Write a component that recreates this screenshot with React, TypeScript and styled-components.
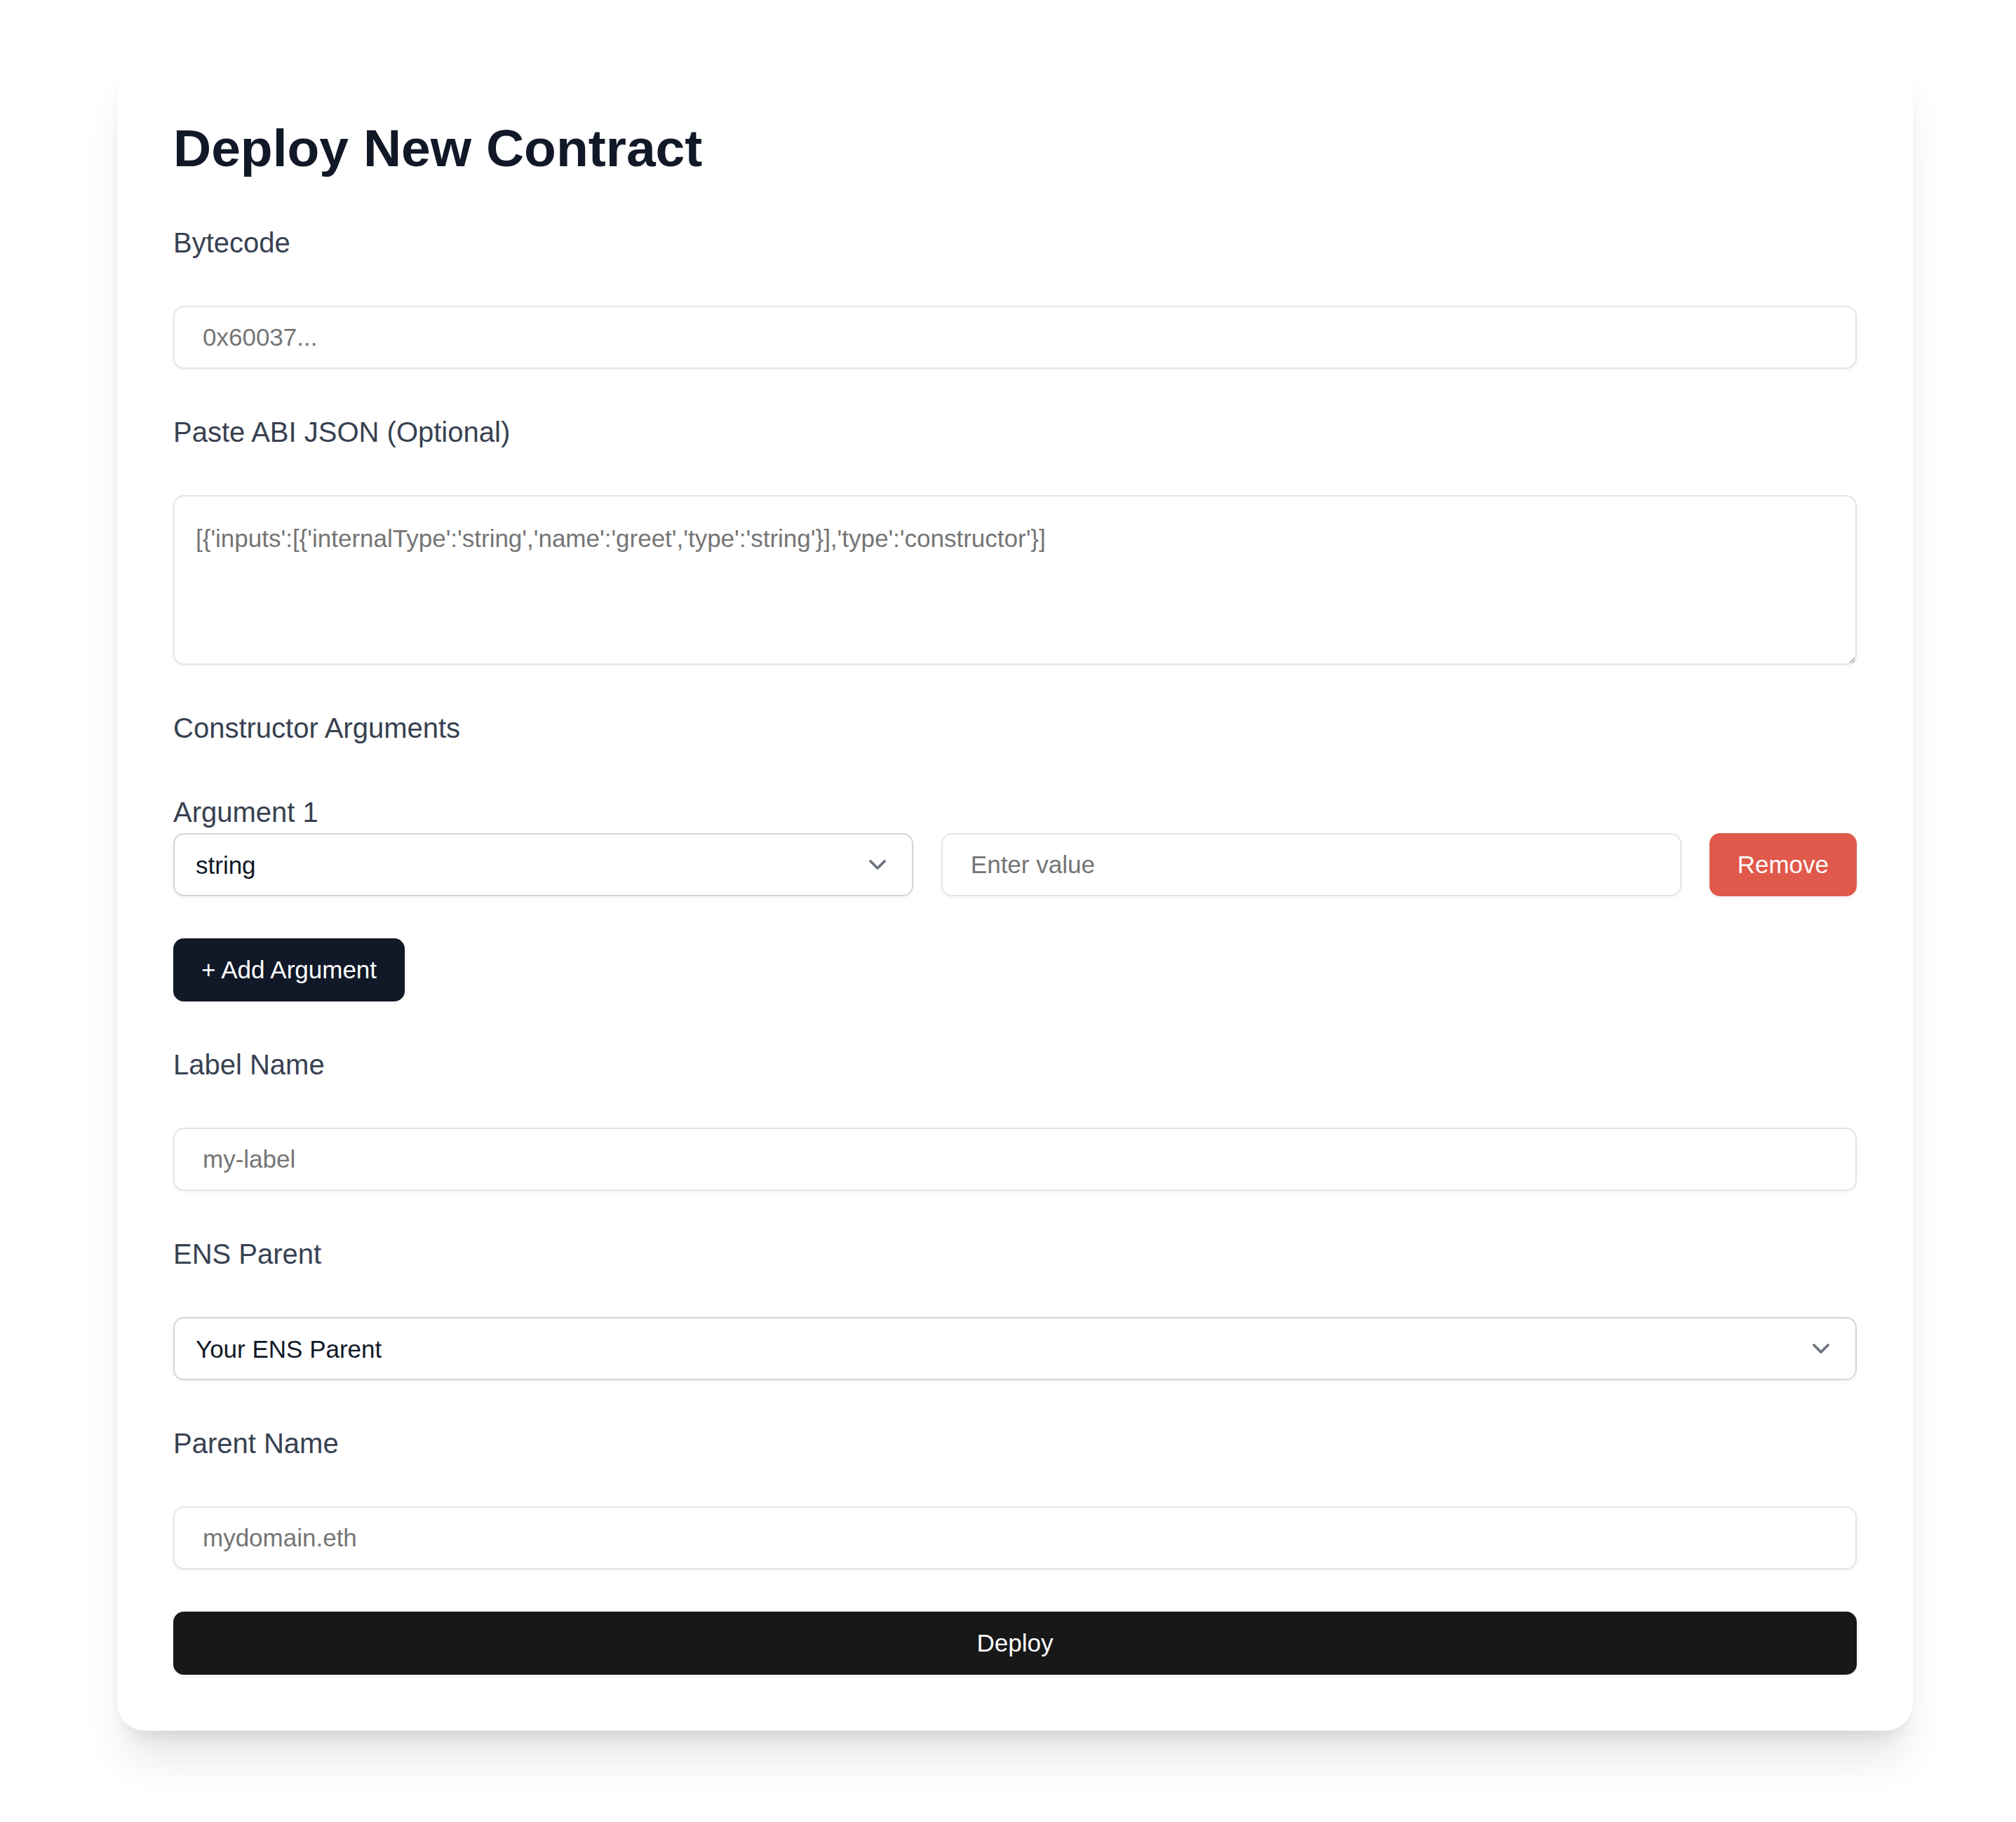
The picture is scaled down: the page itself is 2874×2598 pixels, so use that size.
import styled, { createGlobalStyle } from "styled-components";

const GlobalStyle = createGlobalStyle`
  html, body {
    margin: 0;
    padding: 0;
    background: #ffffff;
  }
  body {
    font-family: "Liberation Sans", Arial, Helvetica, sans-serif;
  }
  * {
    box-sizing: border-box;
  }
`;

const Page = styled.main`
  min-height: 2598px;
  padding: 83px 146px 120px 167px;
`;

const Card = styled.section`
  width: 2560px;
  background: #ffffff;
  border-radius: 40px;
  padding: 83px 80px 80px;
  box-shadow: 0 50px 62px -12px rgba(0, 0, 0, 0.1),
    0 20px 25px -15px rgba(0, 0, 0, 0.1), 0 0 12px rgba(0, 0, 0, 0.02);
`;

const Form = styled.form`
  display: flex;
  flex-direction: column;
  gap: 60px;
`;

const Title = styled.h1`
  margin: 0;
  font-size: 75px;
  line-height: 90px;
  font-weight: 700;
  color: #111827;
`;

const Label = styled.label`
  display: block;
  font-size: 40px;
  line-height: 60px;
  color: #374151;
`;

const TextInput = styled.input`
  display: block;
  width: 100%;
  min-width: 0;
  height: 90px;
  padding: 0 40px;
  border: 2px solid #e5e5e5;
  border-radius: 15px;
  font-family: inherit;
  font-size: 35px;
  color: #111827;
  background: #ffffff;
  box-shadow: 0 2px 5px rgba(0, 0, 0, 0.05);
  outline: none;

  &::placeholder {
    color: #757575;
  }
`;

const TextArea = styled.textarea`
  display: block;
  width: 100%;
  height: 242px;
  padding: 30px;
  border: 2px solid #e5e5e5;
  border-radius: 15px;
  font-family: inherit;
  font-size: 35px;
  line-height: 60px;
  color: #111827;
  background: #ffffff;
  box-shadow: 0 2px 5px rgba(0, 0, 0, 0.05);
  outline: none;

  &::placeholder {
    color: #757575;
  }
`;

const SelectWrap = styled.div`
  position: relative;
  min-width: 0;
`;

const Select = styled.select`
  display: block;
  width: 100%;
  height: 90px;
  padding: 0 100px 0 30px;
  appearance: none;
  border: 2px solid #d1d5db;
  border-radius: 15px;
  font-family: inherit;
  font-size: 35px;
  color: #111827;
  background: #ffffff;
  box-shadow: 0 2px 5px rgba(0, 0, 0, 0.05);
  outline: none;
`;

const Chevron = styled.svg`
  position: absolute;
  right: 26px;
  top: 50%;
  width: 50px;
  height: 50px;
  transform: translateY(-50%);
  pointer-events: none;
`;

const ArgumentGroup = styled.div`
  display: flex;
  flex-direction: column;
`;

const ArgumentRow = styled.div`
  display: grid;
  grid-template-columns: 1fr 1fr auto;
  align-items: center;
  gap: 40px;
`;

const tones = {
  navy: "#111827",
  danger: "#e0594a",
  black: "#181818",
};

const Button = styled.button<{ $tone: keyof typeof tones; $block?: boolean }>`
  align-self: ${(p) => (p.$block ? "stretch" : "flex-start")};
  height: 90px;
  padding: 0 40px;
  border: none;
  border-radius: 15px;
  font-family: inherit;
  font-size: 35px;
  color: #ffffff;
  background: ${(p) => tones[p.$tone]};
  box-shadow: 0 2px 5px rgba(0, 0, 0, 0.06);
  cursor: pointer;
`;

const ChevronIcon = () => (
  <Chevron viewBox="0 0 20 20" fill="none">
    <path
      d="M6 8l4 4 4-4"
      stroke="#6b7280"
      strokeWidth="1.5"
      strokeLinecap="round"
      strokeLinejoin="round"
    />
  </Chevron>
);

const App = () => {
  return (
    <>
      <GlobalStyle />
      <Page>
        <Card>
          <Form onSubmit={(e) => e.preventDefault()}>
            <Title>Deploy New Contract</Title>

            <Label htmlFor="bytecode">Bytecode</Label>
            <TextInput id="bytecode" placeholder="0x60037..." />

            <Label htmlFor="abi">Paste ABI JSON (Optional)</Label>
            <TextArea
              id="abi"
              placeholder="[{'inputs':[{'internalType':'string','name':'greet','type':'string'}],'type':'constructor'}]"
            />

            <Label>Constructor Arguments</Label>

            <ArgumentGroup>
              <Label>Argument 1</Label>
              <ArgumentRow>
                <SelectWrap>
                  <Select defaultValue="string">
                    <option value="string">string</option>
                    <option value="uint256">uint256</option>
                    <option value="address">address</option>
                    <option value="bool">bool</option>
                    <option value="bytes32">bytes32</option>
                  </Select>
                  <ChevronIcon />
                </SelectWrap>
                <TextInput placeholder="Enter value" />
                <Button type="button" $tone="danger">
                  Remove
                </Button>
              </ArgumentRow>
            </ArgumentGroup>

            <Button type="button" $tone="navy">
              + Add Argument
            </Button>

            <Label htmlFor="label-name">Label Name</Label>
            <TextInput id="label-name" placeholder="my-label" />

            <Label htmlFor="ens-parent">ENS Parent</Label>
            <SelectWrap>
              <Select id="ens-parent" defaultValue="">
                <option value="">Your ENS Parent</option>
              </Select>
              <ChevronIcon />
            </SelectWrap>

            <Label htmlFor="parent-name">Parent Name</Label>
            <TextInput id="parent-name" placeholder="mydomain.eth" />

            <Button type="submit" $tone="black" $block>
              Deploy
            </Button>
          </Form>
        </Card>
      </Page>
    </>
  );
};

export default App;
